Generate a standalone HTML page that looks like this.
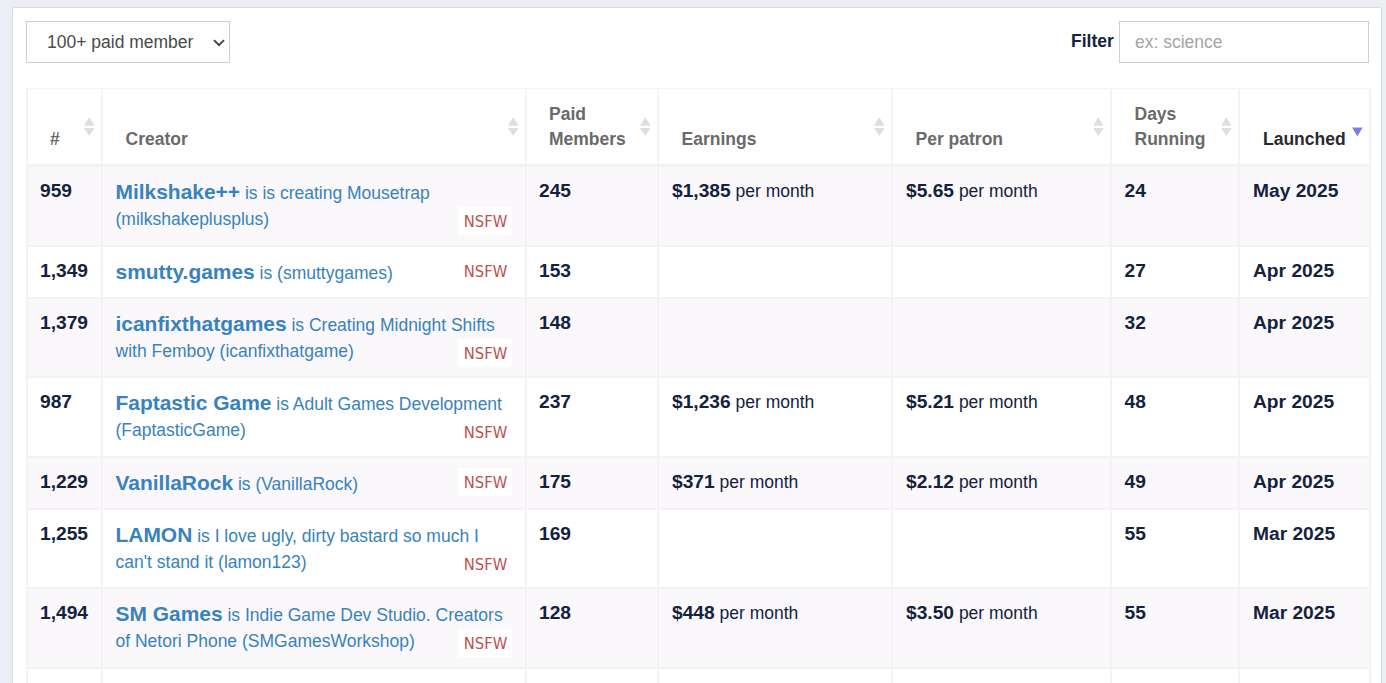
<!DOCTYPE html>
<html lang="en">
<head>
<meta charset="utf-8">
<title>Top Patreon Creators</title>
<style>
html,body{margin:0;padding:0;}
body{width:1386px;height:683px;overflow:hidden;background:#ebeef6;font-family:"Liberation Sans",sans-serif;color:#1c2237;position:relative;}
.card{position:absolute;left:12px;top:7px;width:1368px;height:700px;background:#fff;border:1px solid #dedbe0;border-radius:2px;}
.sel{position:absolute;left:26px;top:21px;width:202px;height:40px;border:1px solid #c9cfde;background:#fff;font-size:17.5px;color:#4a4a4a;line-height:41px;}
.sel span{position:absolute;left:20px;top:0;white-space:nowrap;}
.sel svg{position:absolute;left:185px;top:16px;}
.flabel{position:absolute;left:1071px;top:30.7px;font-size:17.5px;font-weight:bold;color:#14223e;line-height:20px;}
.inp{position:absolute;left:1119px;top:21px;width:248px;height:40px;border:1px solid #c9cfde;background:#fff;font-size:17.5px;color:#a4a4a4;line-height:41px;}
.inp span{position:absolute;left:15px;top:0;white-space:nowrap;}
.rbg{position:absolute;left:26px;width:1345px;background:#faf8fb;}
.hl{position:absolute;left:26px;width:1345px;background:#f4f2f5;}
.vl{position:absolute;top:88px;width:2px;height:600px;background:#f4f2f5;}
.th{position:absolute;font-size:17.5px;font-weight:bold;color:#6a6a6a;line-height:25px;white-space:nowrap;}
.th.act{color:#2a2a2e;}
.sort{position:absolute;top:117px;fill:#dedede;}
.sact{position:absolute;left:1351.6px;top:127.2px;fill:#7c7ce6;}
.r{position:absolute;left:0;width:1386px;height:0;}
.b{position:absolute;top:11px;font-size:19.2px;font-weight:bold;line-height:26px;white-space:nowrap;color:#14223e;}
.b i{font-style:normal;font-weight:normal;font-size:17.5px;}
.c1{left:40px;}
.c3{left:539px;}
.c4{left:672px;}
.c5{left:906px;}
.c6{left:1124.5px;}
.c7{left:1253px;}
.cr{position:absolute;left:115.5px;top:12px;font-size:17.5px;line-height:25.6px;color:#3882be;white-space:nowrap;}
.cr b{font-size:20.95px;line-height:25px;}
.nsfw{position:absolute;left:458px;width:54px;height:28px;background:#fff;color:#c0504d;font-family:"DejaVu Sans Condensed","DejaVu Sans",sans-serif;font-stretch:condensed;font-size:16.4px;line-height:28px;text-align:center;}
.nsfw span{position:relative;left:0.5px;top:1.3px;}
</style>
</head>
<body>
<div class="card"></div>
<div class="sel"><span>100+ paid member</span><svg width="14" height="10" viewBox="0 0 14 10"><path d="M2.0 2.1 L7 7.1 L12.0 2.1" fill="none" stroke="#444" stroke-width="2"/></svg></div>
<div class="flabel">Filter</div>
<div class="inp"><span>ex: science</span></div>
<div class="rbg" style="top:167px;height:78px"></div>
<div class="rbg" style="top:299px;height:77px"></div>
<div class="rbg" style="top:458px;height:50px"></div>
<div class="rbg" style="top:589px;height:78px"></div>
<div class="hl" style="top:88px;height:1px"></div>
<div class="hl" style="top:164px;height:3px"></div>
<div class="hl" style="top:245px;height:2px"></div>
<div class="hl" style="top:297px;height:2px"></div>
<div class="hl" style="top:376px;height:2px"></div>
<div class="hl" style="top:456px;height:2px"></div>
<div class="hl" style="top:508px;height:2px"></div>
<div class="hl" style="top:587px;height:2px"></div>
<div class="hl" style="top:667px;height:2px"></div>
<div class="vl" style="left:26px"></div>
<div class="vl" style="left:101px"></div>
<div class="vl" style="left:525px"></div>
<div class="vl" style="left:657px"></div>
<div class="vl" style="left:891px"></div>
<div class="vl" style="left:1110px"></div>
<div class="vl" style="left:1238px"></div>
<div class="vl" style="left:1369px"></div>
<div class="th" style="left:50px;top:127px">#</div>
<svg class="sort" style="left:83.8px" width="11" height="20" viewBox="0 0 11 20"><path d="M5.3 0.2 L10.6 8.8 L0 8.8 Z"/><path d="M0 11.1 L10.6 11.1 L5.3 19 Z"/></svg>
<div class="th" style="left:125.5px;top:127px">Creator</div>
<svg class="sort" style="left:507.8px" width="11" height="20" viewBox="0 0 11 20"><path d="M5.3 0.2 L10.6 8.8 L0 8.8 Z"/><path d="M0 11.1 L10.6 11.1 L5.3 19 Z"/></svg>
<div class="th" style="left:549px;top:102px">Paid<br>Members</div>
<svg class="sort" style="left:639.8px" width="11" height="20" viewBox="0 0 11 20"><path d="M5.3 0.2 L10.6 8.8 L0 8.8 Z"/><path d="M0 11.1 L10.6 11.1 L5.3 19 Z"/></svg>
<div class="th" style="left:681.5px;top:127px">Earnings</div>
<svg class="sort" style="left:873.8px" width="11" height="20" viewBox="0 0 11 20"><path d="M5.3 0.2 L10.6 8.8 L0 8.8 Z"/><path d="M0 11.1 L10.6 11.1 L5.3 19 Z"/></svg>
<div class="th" style="left:915.5px;top:127px">Per patron</div>
<svg class="sort" style="left:1092.8px" width="11" height="20" viewBox="0 0 11 20"><path d="M5.3 0.2 L10.6 8.8 L0 8.8 Z"/><path d="M0 11.1 L10.6 11.1 L5.3 19 Z"/></svg>
<div class="th" style="left:1134.5px;top:102px">Days<br>Running</div>
<svg class="sort" style="left:1221.2px" width="11" height="20" viewBox="0 0 11 20"><path d="M5.3 0.2 L10.6 8.8 L0 8.8 Z"/><path d="M0 11.1 L10.6 11.1 L5.3 19 Z"/></svg>
<div class="th act" style="left:1263px;top:127px">Launched</div>
<svg class="sact" width="11" height="10" viewBox="0 0 11 10"><path d="M0.1 0.5 L10.7 0.5 L5.4 9.2 Z"/></svg>
<div class="r" style="top:167px">
 <div class="b c1">959</div>
 <div class="cr"><b>Milkshake++</b> is is creating Mousetrap<br>(milkshakeplusplus)</div>
 <div class="nsfw" style="top:40px"><span>NSFW</span></div>
 <div class="b c3">245</div>
 <div class="b c4">$1,385<i> per month</i></div>
 <div class="b c5">$5.65<i> per month</i></div>
 <div class="b c6">24</div>
 <div class="b c7">May 2025</div>
</div>
<div class="r" style="top:247px">
 <div class="b c1">1,349</div>
 <div class="cr"><b>smutty.games</b> is (smuttygames)</div>
 <div class="nsfw" style="top:10px"><span>NSFW</span></div>
 <div class="b c3">153</div>
 <div class="b c6">27</div>
 <div class="b c7">Apr 2025</div>
</div>
<div class="r" style="top:299px">
 <div class="b c1">1,379</div>
 <div class="cr"><b>icanfixthatgames</b> is Creating Midnight Shifts<br>with Femboy (icanfixthatgame)</div>
 <div class="nsfw" style="top:40px"><span>NSFW</span></div>
 <div class="b c3">148</div>
 <div class="b c6">32</div>
 <div class="b c7">Apr 2025</div>
</div>
<div class="r" style="top:378px">
 <div class="b c1">987</div>
 <div class="cr"><b>Faptastic Game</b> is Adult Games Development<br>(FaptasticGame)</div>
 <div class="nsfw" style="top:40px"><span>NSFW</span></div>
 <div class="b c3">237</div>
 <div class="b c4">$1,236<i> per month</i></div>
 <div class="b c5">$5.21<i> per month</i></div>
 <div class="b c6">48</div>
 <div class="b c7">Apr 2025</div>
</div>
<div class="r" style="top:458px">
 <div class="b c1">1,229</div>
 <div class="cr"><b>VanillaRock</b> is (VanillaRock)</div>
 <div class="nsfw" style="top:10px"><span>NSFW</span></div>
 <div class="b c3">175</div>
 <div class="b c4">$371<i> per month</i></div>
 <div class="b c5">$2.12<i> per month</i></div>
 <div class="b c6">49</div>
 <div class="b c7">Apr 2025</div>
</div>
<div class="r" style="top:510px">
 <div class="b c1">1,255</div>
 <div class="cr"><b>LAMON</b> is I love ugly, dirty bastard so much I<br>can't stand it (lamon123)</div>
 <div class="nsfw" style="top:40px"><span>NSFW</span></div>
 <div class="b c3">169</div>
 <div class="b c6">55</div>
 <div class="b c7">Mar 2025</div>
</div>
<div class="r" style="top:589px">
 <div class="b c1">1,494</div>
 <div class="cr"><b>SM Games</b> is Indie Game Dev Studio. Creators<br>of Netori Phone (SMGamesWorkshop)</div>
 <div class="nsfw" style="top:40px"><span>NSFW</span></div>
 <div class="b c3">128</div>
 <div class="b c4">$448<i> per month</i></div>
 <div class="b c5">$3.50<i> per month</i></div>
 <div class="b c6">55</div>
 <div class="b c7">Mar 2025</div>
</div>
</body>
</html>
